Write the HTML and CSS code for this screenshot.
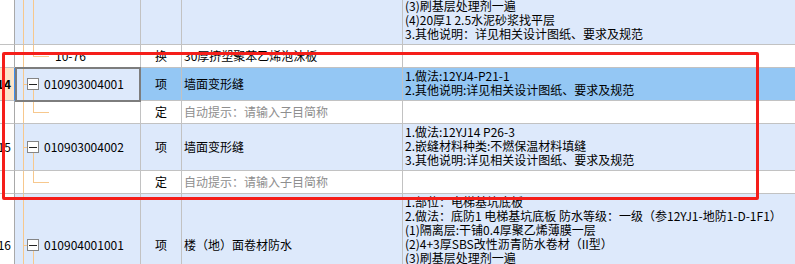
FILE: index.html
```html
<!DOCTYPE html>
<html>
  <head>
    <meta http-equiv="Content-type" content="text/html; charset=utf-8">
    <title>清单列表</title>
    <link rel="stylesheet" href="styles.css">
  </head>
  <body>
    <div class="grid">
      <!-- 上一条清单（只露出底部） -->
      <div class="row">
        <div class="c_no">13</div>
        <div class="c_code tree_item bg_item"><span class="fold"></span>010904001002</div>
        <div class="c_type bg_item">项</div>
        <div class="c_name bg_item">楼（地）面卷材防水</div>
        <div class="c_desc bg_item">
          <div>1.部位：电梯基坑侧壁</div>
          <div>2.做法：底防1 电梯基坑侧壁 防水等级：一级（参12YJ1-地防1-D-1F1）</div>
          <div>(1)隔离层:干铺0.4厚聚乙烯薄膜一层</div>
          <div>(2)4+3厚SBS改性沥青防水卷材（II型）</div>
          <div>(3)刷基层处理剂一遍</div>
          <div>(4)20厚1 2.5水泥砂浆找平层</div>
          <div>3.其他说明：详见相关设计图纸、要求及规范</div>
        </div>
      </div>
      <div class="row">
        <div class="c_no"></div>
        <div class="c_code tree_sub">10-76</div>
        <div class="c_type">换</div>
        <div class="c_name">30厚挤塑聚苯乙烯泡沫板</div>
        <div class="c_desc"></div>
      </div>
      <!-- 14 当前选中 -->
      <div class="row">
        <div class="c_no no_sel">14</div>
        <div class="c_code tree_item bg_item c_focus"><span class="fold"></span>010903004001</div>
        <div class="c_type bg_sel">项</div>
        <div class="c_name bg_sel">墙面变形缝</div>
        <div class="c_desc bg_sel">
          <div>1.做法:12YJ4-P21-1</div>
          <div>2.其他说明:详见相关设计图纸、要求及规范</div>
        </div>
      </div>
      <div class="row">
        <div class="c_no"></div>
        <div class="c_code tree_sub"></div>
        <div class="c_type">定</div>
        <div class="c_name hint">自动提示：请输入子目简称</div>
        <div class="c_desc"></div>
      </div>
      <!-- 15 -->
      <div class="row">
        <div class="c_no">15</div>
        <div class="c_code tree_item bg_item"><span class="fold"></span>010903004002</div>
        <div class="c_type bg_item">项</div>
        <div class="c_name bg_item">墙面变形缝</div>
        <div class="c_desc bg_item">
          <div>1.做法:12YJ14 P26-3</div>
          <div>2.嵌缝材料种类:不燃保温材料填缝</div>
          <div>3.其他说明:详见相关设计图纸、要求及规范</div>
        </div>
      </div>
      <div class="row">
        <div class="c_no"></div>
        <div class="c_code tree_sub"></div>
        <div class="c_type">定</div>
        <div class="c_name hint">自动提示：请输入子目简称</div>
        <div class="c_desc"></div>
      </div>
      <!-- 16 -->
      <div class="row">
        <div class="c_no">16</div>
        <div class="c_code tree_item bg_item"><span class="fold"></span>010904001001</div>
        <div class="c_type bg_item">项</div>
        <div class="c_name bg_item">楼（地）面卷材防水</div>
        <div class="c_desc bg_item">
          <div>1.部位：电梯基坑底板</div>
          <div>2.做法：底防1 电梯基坑底板 防水等级：一级（参12YJ1-地防1-D-1F1）</div>
          <div>(1)隔离层:干铺0.4厚聚乙烯薄膜一层</div>
          <div>(2)4+3厚SBS改性沥青防水卷材（II型）</div>
          <div>(3)刷基层处理剂一遍</div>
          <div>(4)20厚1 2.5水泥砂浆找平层</div>
          <div>3.其他说明：详见相关设计图纸、要求及规范</div>
        </div>
      </div>
    </div>
    <div class="mark"></div>
  </body>
</html>
```
FILE: styles.css
```css
body,html {height:100%; margin:0; overflow:hidden; background:#fff;}
body {font:12px/14px "Noto Sans CJK SC","Noto Sans",sans-serif; color:#000;}
.grid {margin-top:-58px;}
.row {display:grid; grid-template-columns:15px 126px 41px 221px 1fr;}
.row > div {box-sizing:border-box; min-height:23px; border-right:1px solid #c2c2c2; border-bottom:1px solid #c2c2c2; white-space:nowrap;}
.row > div:last-child {border-right:0;}

.row .c_no {display:flex; align-items:center; justify-content:flex-end; padding-right:3px; overflow:hidden; border-right-color:#a9a9a9;}
.row .no_sel {background:#fde4c9; border-right-color:#3c8ff0; font-weight:bold;}

.c_code {display:flex; align-items:center; background-repeat:no-repeat;}
.tree_item {padding-left:12px;
  background-image:linear-gradient(#f7c88d,#f7c88d),linear-gradient(#f7c88d,#f7c88d),linear-gradient(#f7c88d,#f7c88d);
  background-position:8px 0,8px 50%,18px 100%;
  background-size:1px 100%,4px 1px,1px 50%;}
.tree_sub {padding-left:40px;
  background-image:linear-gradient(#f7c88d,#f7c88d),linear-gradient(#f7c88d,#f7c88d),linear-gradient(#f7c88d,#f7c88d);
  background-position:8px 0,18px 0,18px 50%;
  background-size:1px 100%,1px 50%,16px 1px;}
.fold {flex:none; display:flex; align-items:center; justify-content:center; width:12px; height:12px; box-sizing:border-box; margin-right:5px; border:1px solid #858585; background:#fff;}
.fold::before {content:""; width:8px; height:1px; background:#222;}
.c_focus {position:relative;}
.c_focus::after {content:""; position:absolute; left:0; right:-1px; top:-1px; bottom:-2px; border:2px solid #7d7d7d;}

.c_type {display:flex; align-items:center; justify-content:center;}
.c_name {display:flex; align-items:center; padding-left:2px;}
.c_desc {padding:1px 2px 3px 2px;}
.hint {color:#8e8e8e;}

.bg_item {background-color:#dde9fb;}
.bg_sel {background-color:#94c7f4;}

.mark {position:absolute; left:2px; top:52px; width:757px; height:148px; box-sizing:border-box; border:3px solid #f51e1a; border-radius:2px;}
```
